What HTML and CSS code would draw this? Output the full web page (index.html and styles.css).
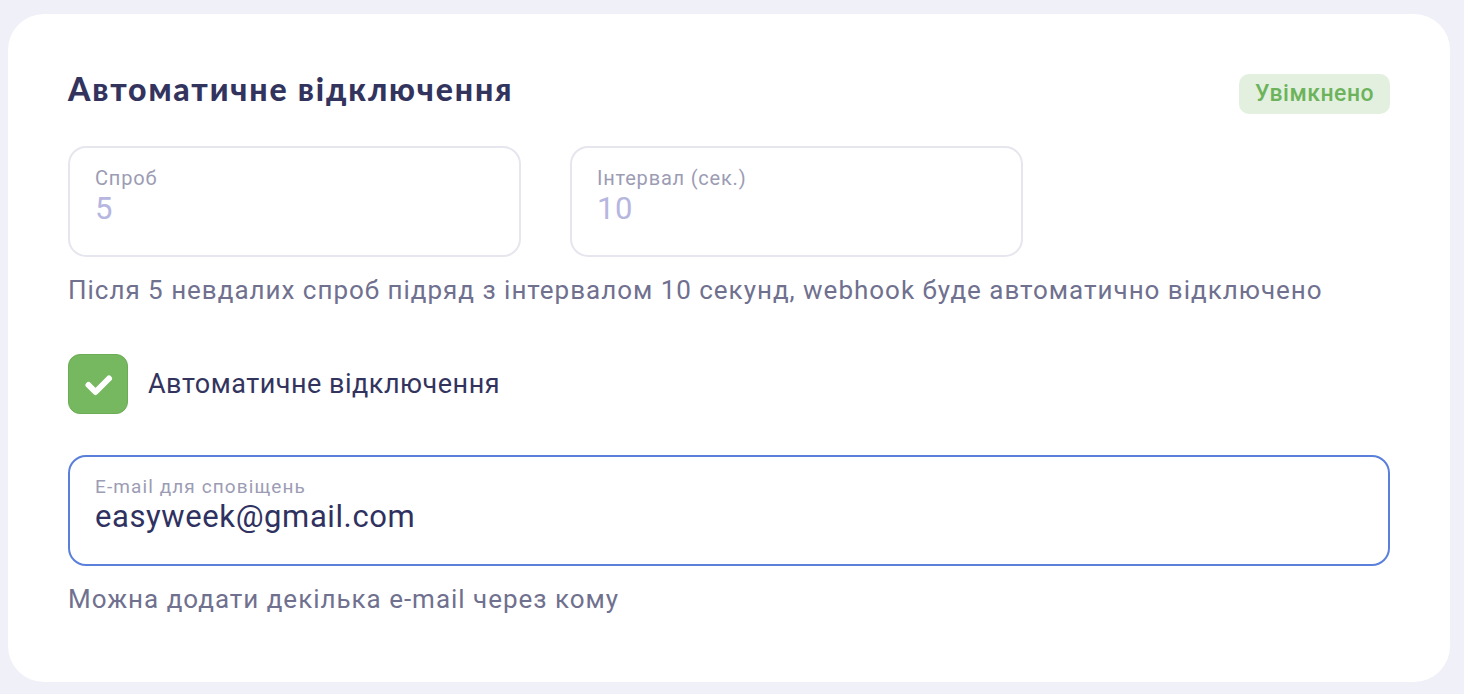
FILE: index.html
```html
<!DOCTYPE html>
<html lang="uk">
<head>
<meta charset="utf-8">
<title>Автоматичне відключення</title>
<link rel="stylesheet" href="styles.css">
</head>
<body>
<div class="card">
  <div class="header">
    <h2 class="title">Автоматичне відключення</h2>
    <span class="badge">Увімкнено</span>
  </div>
  <div class="fields">
    <div class="field">
      <div class="field-label">Спроб</div>
      <div class="field-value muted">5</div>
    </div>
    <div class="field">
      <div class="field-label">Інтервал (сек.)</div>
      <div class="field-value muted">10</div>
    </div>
  </div>
  <p class="hint">Після 5 невдалих спроб підряд з інтервалом 10 секунд, webhook буде автоматично відключено</p>
  <label class="check-row">
    <span class="checkbox">
      <svg width="58" height="58" viewBox="0 0 58 58"><path d="M19.5 30 L26.5 37 L40 23.5" fill="none" stroke="#fff" stroke-width="6" stroke-linecap="round" stroke-linejoin="round"/></svg>
    </span>
    <span class="check-label">Автоматичне відключення</span>
  </label>
  <div class="field field-wide focused">
    <div class="field-label small">E-mail для сповіщень</div>
    <div class="field-value email">easyweek@gmail.com</div>
  </div>
  <p class="hint hint-bottom">Можна додати декілька e-mail через кому</p>
</div>
</body>
</html>
```
FILE: styles.css
```css
* { box-sizing: border-box; }
html, body { margin: 0; padding: 0; }
body {
  background: #f0f0f8;
  font-family: Roboto, "Liberation Sans", sans-serif;
  padding: 14px 14px 12px 8px;
}
.card {
  background: #ffffff;
  border-radius: 36px;
  height: 668px;
  padding: 60px 60px 0 60px;
}
.header {
  display: flex;
  justify-content: space-between;
  align-items: flex-start;
  height: 72px;
}
.title {
  margin: 0;
  font-family: Lato, "Open Sans", sans-serif;
  font-weight: 900;
  font-size: 32px;
  line-height: 30px;
  color: #33345e;
  letter-spacing: 1.85px;
}
.badge {
  background: #e3f0df;
  color: #6cb35c;
  font-size: 23px;
  font-weight: 500;
  letter-spacing: 0.5px;
  height: 40px;
  line-height: 40px;
  width: 151px;
  text-align: center;
  border-radius: 10px;
}
.fields {
  display: flex;
  gap: 49px;
}
.field {
  width: 453px;
  height: 111px;
  border: 2px solid #e6e6ee;
  border-radius: 18px;
  padding: 18px 25px 0 25px;
}
.field-label {
  font-size: 20px;
  line-height: 24px;
  letter-spacing: 0.8px;
  color: #9c9cb4;
}
.field-value {
  font-size: 31px;
  line-height: 34px;
  letter-spacing: 0.5px;
}
.field-value.muted {
  color: #b6b6e0;
  margin-top: 2px;
}
.hint {
  margin: 17px 0 0 0;
  font-size: 26px;
  line-height: 32px;
  letter-spacing: 0.98px;
  color: #70708f;
}
.check-row {
  display: flex;
  align-items: center;
  gap: 20px;
  margin-top: 48px;
}
.checkbox {
  width: 60px;
  height: 60px;
  border-radius: 12px;
  background: #75b85f;
  border: 1px solid #6aad55;
  display: flex;
  align-items: center;
  justify-content: center;
}
.check-label {
  font-size: 27px;
  letter-spacing: 0.5px;
  color: #33345e;
}
.field-wide {
  width: 100%;
  margin-top: 41px;
  height: 111px;
  border-color: #5a80db;
  padding-top: 18px;
}
.field-label.small {
  font-size: 19px;
  letter-spacing: 1.1px;
}
.field-value.email {
  color: #2f3160;
  font-size: 31px;
  line-height: 36px;
  letter-spacing: 0.6px;
}
.hint-bottom { margin-top: 17px; }
```
